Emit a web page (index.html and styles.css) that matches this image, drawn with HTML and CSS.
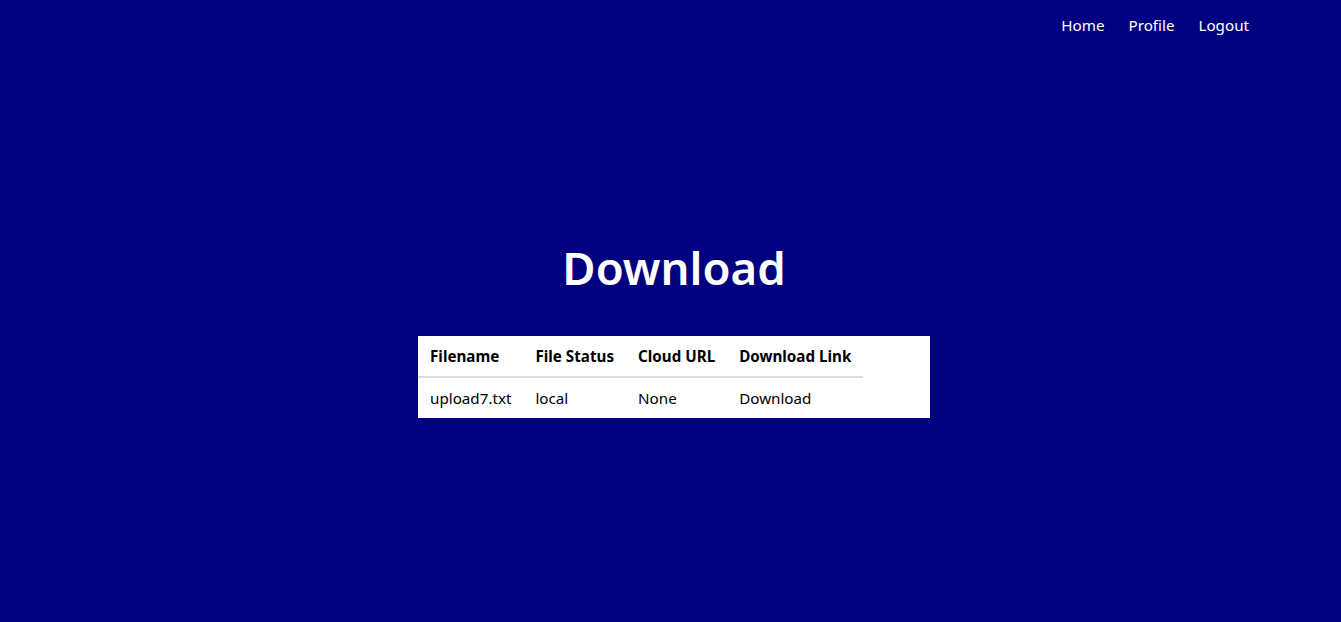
FILE: index.html
```html
<!DOCTYPE html>
<html lang="en">
<head>
<meta charset="utf-8">
<title>Download</title>
<link rel="stylesheet" href="styles.css">
</head>
<body>
<nav class="topnav">
  <a href="#" class="nav-link">Home</a>
  <a href="#" class="nav-link">Profile</a>
  <a href="#" class="nav-link">Logout</a>
</nav>
<main class="content">
  <h1 class="title">Download</h1>
  <div class="card">
    <table class="files">
      <thead>
        <tr><th>Filename</th><th>File Status</th><th>Cloud URL</th><th>Download Link</th></tr>
      </thead>
      <tbody>
        <tr><td>upload7.txt</td><td>local</td><td>None</td><td><a href="#" class="dl">Download</a></td></tr>
      </tbody>
    </table>
  </div>
</main>
</body>
</html>
```
FILE: styles.css
```css
html, body {
  margin: 0;
  padding: 0;
}
body {
  background: #000080;
  font-family: "Noto Sans", "Open Sans", sans-serif;
  font-size: 15.2px;
  color: #fff;
  min-height: 622px;
}
.topnav {
  display: flex;
  justify-content: flex-end;
  gap: 24px;
  padding: 14px 92px 0 0;
  height: 36px;
  box-sizing: border-box;
}
.nav-link {
  color: #fff;
  text-decoration: none;
  font-size: 15.2px;
  line-height: 22px;
}
.content {
  display: flex;
  flex-direction: column;
  align-items: center;
  padding: 199px 0 0 7px;
}
.title {
  margin: 0 0 37px;
  font-size: 45.5px;
  font-weight: 600;
  line-height: 64px;
}
.card {
  background: #fff;
  width: 512px;
  color: #000;
}
.files {
  border-collapse: collapse;
}
.files th, .files td {
  text-align: left;
  padding: 9px 12px;
  line-height: 22px;
  white-space: nowrap;
}
.files th {
  font-weight: 700;
  border-bottom: 2px solid #dcdcdc;
}
.dl {
  color: #000;
  text-decoration: none;
}
```
